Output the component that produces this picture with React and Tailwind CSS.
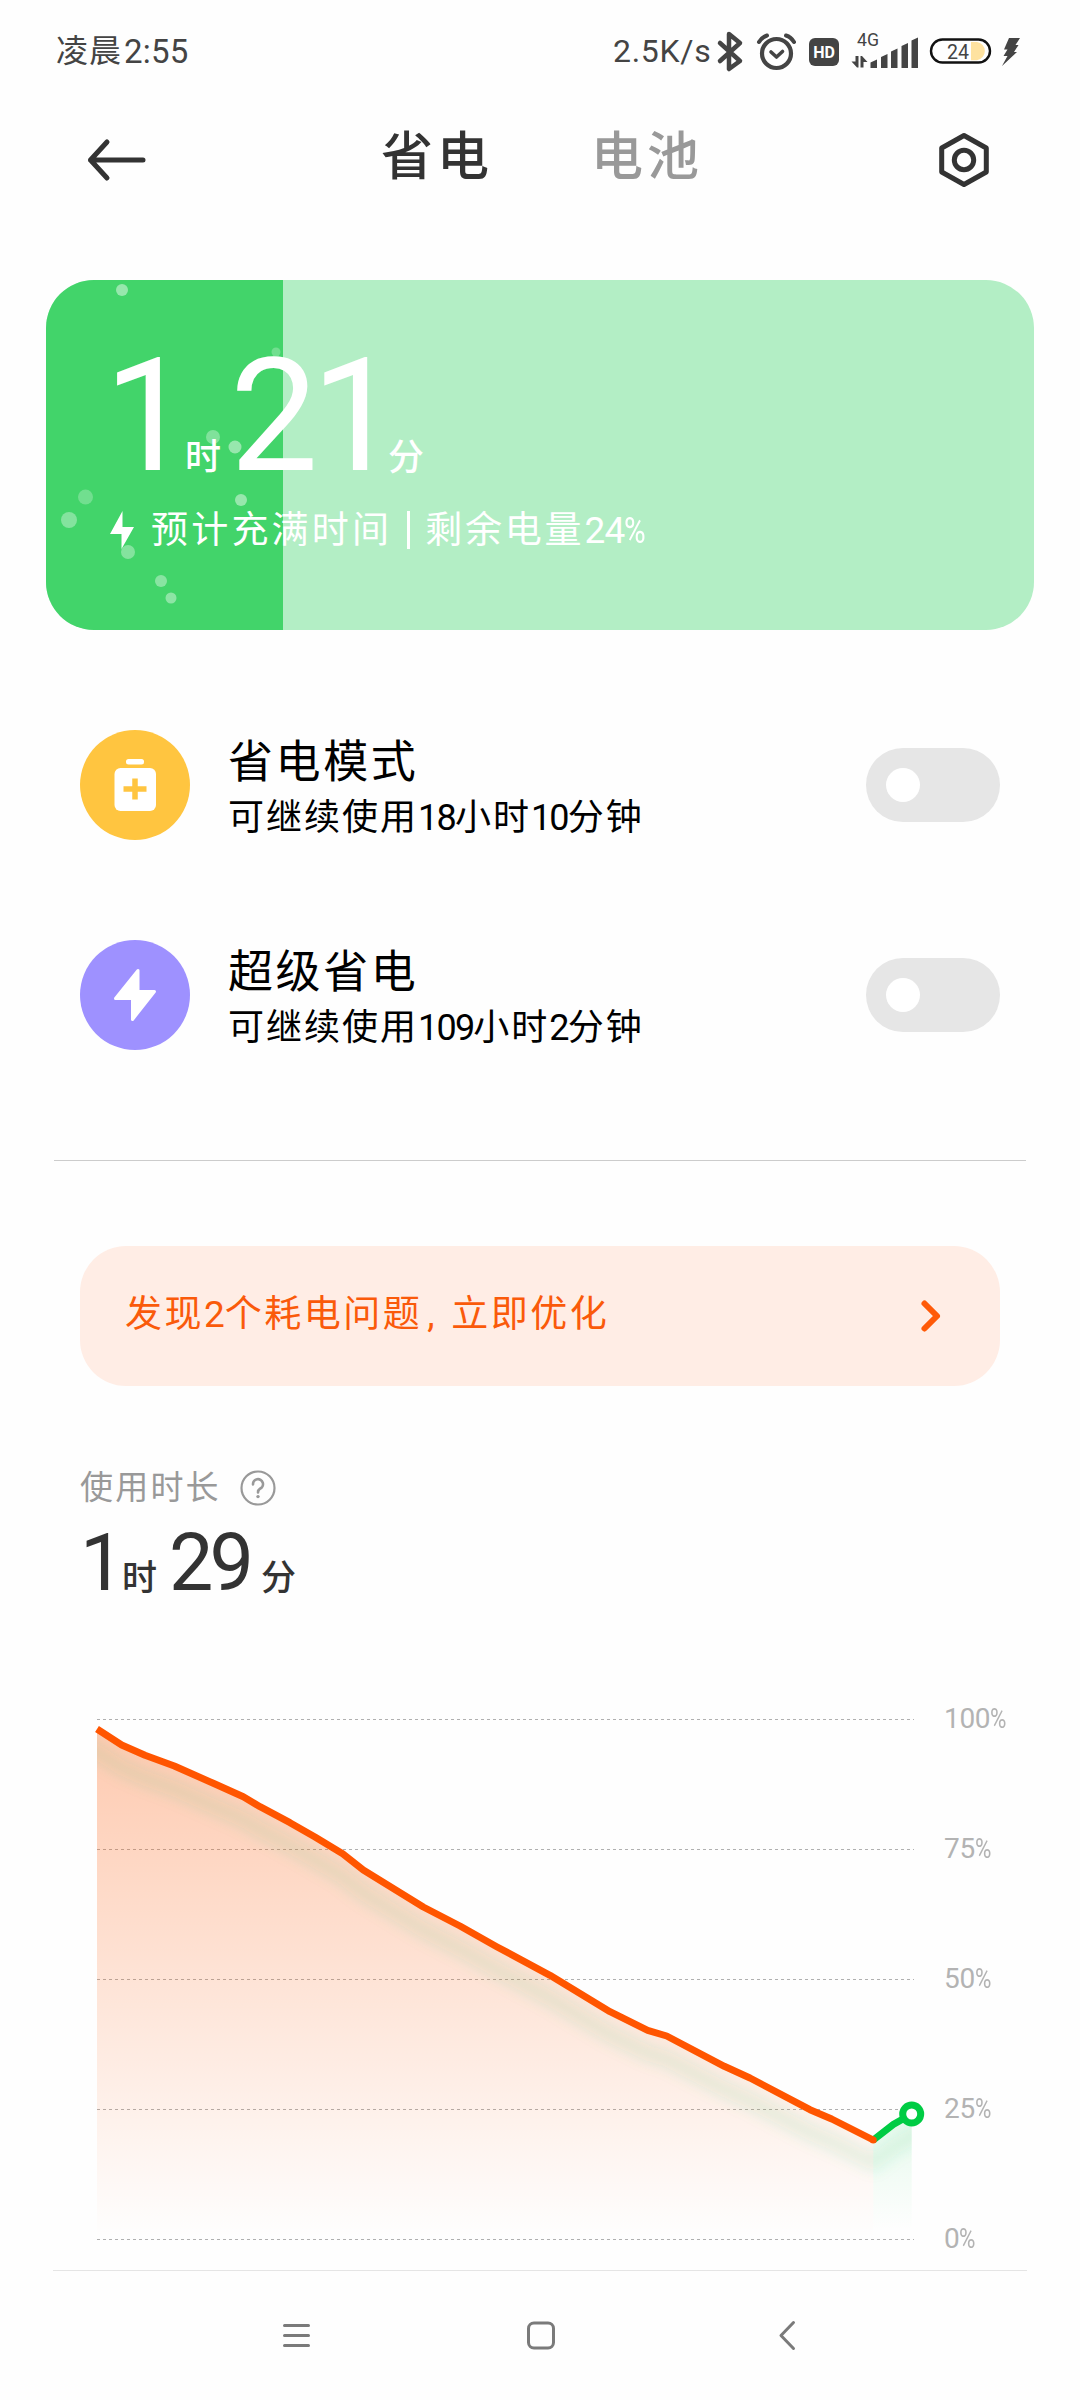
import { useState } from 'react';

const GRID_Y = [1719, 1849, 1979, 2109, 2239];
const LABELS = ['100%', '75%', '50%', '25%', '0%'];

const DRAIN =
    '97,1729 121.7,1745 145,1755.3 174.3,1766 213.3,1783.3 243.3,1796.7 260,1806.7 290,1822.7 315,1837 342.7,1853.7 363.3,1870 423.3,1907 460,1926 496.7,1946.7 550,1975.3 580,1993.6 610,2011.7 647.7,2030.3 666.7,2036 724.3,2066.3 750,2078 810,2109.7 831.7,2119 873.3,2140';
const CHARGE = '873.3,2140 893.3,2124.5 911.7,2114';

// x, y, radius, opacity inside the battery card
const BUBBLES = [
    [76, 10, 6, 0.45],
    [230, 72, 4.5, 0.25],
    [167, 157, 7, 0.33],
    [189, 167, 6.5, 0.45],
    [39.5, 217, 7.5, 0.25],
    [23, 240, 8, 0.35],
    [195, 220, 6, 0.45],
    [82, 272, 7, 0.35],
    [115, 301, 6, 0.38],
    [125, 318, 5.5, 0.4],
];

function StatusBar() {
    return (
        <div className="flex h-[100px] items-start pl-[56px] text-[#444444]">
            <div className="flex h-[102px] w-[557px] items-center text-[32px] leading-none">
                <span className="tracking-[1px]">凌晨</span>
                <span className="ml-[2px] text-[33px] tracking-[0.2px]">2:55</span>
            </div>
            <div className="flex h-[102px] w-[99px] items-center text-[32px] leading-none tracking-[0.7px]">2.5K/s</div>
            <svg className="h-[100px] w-[330px] shrink-0" viewBox="712 0 330 100" fill="none">
                <path d="M720 43 L740 61 L729 69 V34 L740 43 L720 61" stroke="#444444" strokeWidth="4.5" strokeLinejoin="round" strokeLinecap="round" />
                <circle cx="776.5" cy="53.5" r="14.5" stroke="#444444" strokeWidth="4.2" />
                <path d="M771 52 L776.5 57 L782.5 51.5" stroke="#444444" strokeWidth="3.6" strokeLinecap="round" strokeLinejoin="round" />
                <path d="M759 42 Q762 37 767 35.5 M786 35.5 Q791 37 794 42" stroke="#444444" strokeWidth="4" strokeLinecap="round" />
                <rect x="809" y="38" width="30" height="28" rx="6" fill="#444444" />
                <text x="824" y="57.7" textAnchor="middle" fill="#ffffff" className="text-[16px] font-bold">HD</text>
                <text x="857" y="46" fill="#444444" textLength="22" lengthAdjust="spacingAndGlyphs" className="text-[18px]">4G</text>
                <path d="M851.5 61.5 H855.5 V56 H858.5 V67.5 H857 Z M860.5 56 H862 L867.5 62 H863.5 V67.5 H860.5 Z" fill="#444444" />
                <path d="M870.5 62.5 L877 59.5 V68 H870.5 Z M881 57 L887.5 54 V68 H881 Z M891 51.5 L897.5 48.5 V68 H891 Z M901.5 46 L908 43 V68 H901.5 Z M911.5 40.5 L918 37.5 V68 H911.5 Z" fill="#444444" />
                <rect x="931" y="39.5" width="59" height="23" rx="11.5" stroke="#111111" strokeWidth="2.4" />
                <path d="M971 42 H977 A9.2 9.2 0 0 1 977 60.2 H971 Z" fill="#fee2a0" />
                <text x="947" y="58.5" fill="#444444" textLength="22" lengthAdjust="spacingAndGlyphs" className="text-[21px]">24</text>
                <path d="M1009 38 H1020 L1015.5 45 H1018.5 L1014 52 H1017 L1002 66 L1007.5 56 H1003.5 L1007.5 49.5 H1004 Z" fill="#444444" />
            </svg>
        </div>
    );
}

function Header() {
    return (
        <div className="flex h-[120px] items-center pl-[86px] pr-[89px]">
            <svg className="h-[44px] w-[62px]" viewBox="0 0 62 44" fill="none" stroke="#333333" strokeWidth="5" strokeLinecap="round" strokeLinejoin="round">
                <path d="M21 4 L4.5 22 L21 40 M4.5 22 H57" />
            </svg>
            <div className="ml-[233px] flex pb-[5px] text-[52px] font-medium leading-none tracking-[4px]">
                <span className="w-[210px] text-[#333333]">省电</span>
                <span className="text-[#999999]">电池</span>
            </div>
            <svg className="ml-auto h-[58px] w-[54px]" viewBox="0 0 54 58" fill="none" stroke="#333333" strokeWidth="5" strokeLinejoin="round">
                <path d="M27 4.5 L49.3 17 V41 L27 53.5 L4.7 41 V17 Z" />
                <circle cx="27" cy="29" r="9.7" />
            </svg>
        </div>
    );
}

function BatteryCard() {
    return (
        <div className="relative mx-[46px] mt-[60px] h-[350px] overflow-hidden rounded-[48px] bg-[#b3eec5] text-white">
            <div className="absolute inset-y-0 left-0 w-[237px] bg-[#42d46a]">
                <svg className="h-full w-full" viewBox="0 0 237 350">
                    {BUBBLES.map(([x, y, r, o]) => (
                        <circle key={`${x}-${y}`} cx={x} cy={y} r={r} fill="#ffffff" opacity={o} />
                    ))}
                </svg>
            </div>
            <div className="relative flex h-[218px] items-baseline pl-[58px] pt-[58px] leading-none">
                <span className="w-[81px] text-[157px] leading-[157px] tracking-[-8px]">1</span>
                <span className="w-[45px] text-[36px] font-medium">时</span>
                <span className="w-[158px] text-[157px] leading-[157px] tracking-[-7px]">21</span>
                <span className="text-[36px] font-medium">分</span>
            </div>
            <div className="relative flex h-[64px] items-center pl-[64px] text-[37px] leading-none">
                <svg className="h-[38px] w-[24px]" viewBox="0 0 24 38" fill="#ffffff">
                    <path d="M12.5 0 V16 H24 L11.5 38 V23 H0 Z" />
                </svg>
                <span className="ml-[17px] tracking-[3.2px]">预计充满时间</span>
                <span className="ml-[15px] h-[38px] w-[3px] bg-white"></span>
                <span className="ml-[15px] tracking-[2.8px]">剩余电量</span>
                <span className="text-[37px] tracking-[-0.8px]">24</span>
                <span className="inline-block origin-left scale-x-80 text-[37px]">%</span>
            </div>
        </div>
    );
}

function Switch() {
    const [on, setOn] = useState(false);

    return (
        <button
            type="button"
            aria-pressed={on}
            onClick={() => setOn(!on)}
            className={`ml-auto flex h-[74px] w-[134px] items-center rounded-full px-[20px] ${on ? 'justify-end bg-[#42d46a]' : 'bg-[#e6e6e6]'}`}
        >
            <span className="h-[34px] w-[34px] rounded-full bg-white"></span>
        </button>
    );
}

function ModeRow({ icon, color, title, children }) {
    return (
        <div className="flex h-[110px] items-center">
            <div className={`flex h-[110px] w-[110px] items-center justify-center rounded-full ${color}`}>{icon}</div>
            <div className="ml-[38px] pt-[10px] text-black">
                <div className="text-[45px] leading-[54px] tracking-[2.6px]">{title}</div>
                <div className="mt-px text-[36px] leading-[54px] tracking-[2px]">{children}</div>
            </div>
            <Switch />
        </div>
    );
}

function Digits({ children }) {
    return <span className="tracking-[-1.8px]">{children}</span>;
}

function Modes() {
    return (
        <div className="mt-[100px] flex flex-col gap-[100px] px-[80px]">
            <ModeRow
                title="省电模式"
                color="bg-[#ffc540]"
                icon={
                    <svg className="h-[110px] w-[110px]" viewBox="0 0 110 110">
                        <rect x="46" y="29" width="18" height="5.5" rx="2.5" fill="#ffffff" />
                        <rect x="34.5" y="38" width="41.5" height="43" rx="6" fill="#ffffff" />
                        <path d="M43.5 59 H66.5 M55 48.5 V69.5" stroke="#ffc540" strokeWidth="5.5" />
                    </svg>
                }
            >
                可继续使用<Digits>18</Digits>小时<Digits>10</Digits>分钟
            </ModeRow>
            <ModeRow
                title="超级省电"
                color="bg-[#9e91ff]"
                icon={
                    <svg className="h-[110px] w-[110px]" viewBox="0 0 110 110" fill="#ffffff" stroke="#ffffff" strokeWidth="3" strokeLinejoin="round">
                        <path d="M58 30.5 V51.5 H74.5 L52.5 79.5 V58.5 H35.5 Z" />
                    </svg>
                }
            >
                可继续使用<Digits>109</Digits>小时<Digits>2</Digits>分钟
            </ModeRow>
        </div>
    );
}

function Banner() {
    return (
        <div className="mx-[80px] mt-[85px] flex h-[140px] items-center rounded-[46px] bg-[#ffede5] pl-[45px] pr-[58px] text-[37px] leading-none text-[#fa5a0a]">
            <span className="flex pb-[3px] tracking-[2.5px]">
                <span>发现</span>
                <span className="tracking-[0px]">2</span>
                <span>个耗电问题</span>
                <span className="w-[29px] pl-[5px]">,</span>
                <span>立即优化</span>
            </span>
            <svg className="ml-auto h-[34px] w-[22px]" viewBox="0 0 22 34" fill="none" stroke="#ff5a08" strokeWidth="6" strokeLinecap="round" strokeLinejoin="round">
                <path d="M4.5 4.5 L17 17 L4.5 29.5" />
            </svg>
        </div>
    );
}

function Usage() {
    return (
        <div className="mt-[80px] px-[80px]">
            <div className="flex h-[42px] items-center text-[33px] leading-none text-[#999999]">
                <span className="tracking-[2.2px]">使用时长</span>
                <svg className="ml-[19px] mt-[2px] h-[36px] w-[36px]" viewBox="0 0 36 36" fill="none" stroke="#999999">
                    <circle cx="18" cy="18" r="16.5" strokeWidth="2.2" />
                    <path d="M13 14.5 A5 5 0 1 1 20 18.7 Q18 20 18 22.5" strokeWidth="2.6" strokeLinecap="round" />
                    <circle cx="18" cy="26.6" r="1.7" fill="#999999" stroke="none" />
                </svg>
            </div>
            <div className="mt-[9px] flex h-[92px] items-baseline text-[#333333]">
                <span className="w-[42px] text-[79px] leading-[92px] tracking-[-3px]">1</span>
                <span className="w-[47px] text-[35px] font-medium leading-none">时</span>
                <span className="w-[92px] text-[79px] leading-[92px] tracking-[-4px]">29</span>
                <span className="text-[35px] font-medium leading-none">分</span>
            </div>
        </div>
    );
}

function Chart() {
    return (
        <div className="mt-[81px] flex h-[564px]">
            <svg className="h-[564px] w-[944px] shrink-0" viewBox="0 1690 944 564" fill="none">
                <defs>
                    <linearGradient id="drain" gradientUnits="userSpaceOnUse" x1="0" y1="1729" x2="0" y2="2239">
                        <stop offset="0" stopColor="#ff5500" stopOpacity="0.31" />
                        <stop offset="1" stopColor="#ff5500" stopOpacity="0" />
                    </linearGradient>
                    <linearGradient id="charge" gradientUnits="userSpaceOnUse" x1="0" y1="2114" x2="0" y2="2230">
                        <stop offset="0" stopColor="#00cc44" stopOpacity="0.1" />
                        <stop offset="1" stopColor="#00cc44" stopOpacity="0" />
                    </linearGradient>
                    <clipPath id="area">
                        <polygon points={`${DRAIN} ${CHARGE} 911.7,2239 97,2239`} />
                    </clipPath>
                    <filter id="soft" filterUnits="userSpaceOnUse" x="0" y="1690" width="944" height="564">
                        <feGaussianBlur stdDeviation="7" />
                    </filter>
                </defs>
                {GRID_Y.map((y) => (
                    <path key={y} d={`M97 ${y + 0.5} H914`} stroke="#b0b0b0" strokeDasharray="3 3" />
                ))}
                <polygon points={`${DRAIN} 873.3,2239 97,2239`} fill="url(#drain)" />
                <polygon points={`${CHARGE} 911.7,2239 873.3,2239`} fill="url(#charge)" />
                <g clipPath="url(#area)">
                    <polyline points={`80,1718 ${DRAIN} ${CHARGE} 930,2104`} transform="translate(0 23)" stroke="#33bb66" strokeOpacity="0.12" strokeWidth="15" filter="url(#soft)" />
                </g>
                <polyline points={CHARGE} stroke="#00cc44" strokeWidth="7" />
                <polyline points={DRAIN} stroke="#ff5500" strokeWidth="7" strokeLinejoin="round" />
                <circle cx="873.3" cy="2140" r="3.5" fill="#ff5500" />
                <circle cx="911.7" cy="2114" r="9" fill="#ffffff" stroke="#00cc44" strokeWidth="7" />
            </svg>
            <div className="flex h-[563px] flex-col justify-between pt-[15px] text-[28px] leading-[28px] tracking-[-0.3px] text-[#b3b3b3]">
                {LABELS.map((label) => (
                    <div key={label} className="flex">
                        <span>{label.replace('%', '')}</span>
                        <span className="origin-left scale-x-80">%</span>
                    </div>
                ))}
            </div>
        </div>
    );
}

function NavBar() {
    return (
        <div className="mx-[53px] mt-[16px] flex h-[130px] items-center border-t border-[#e5e5e5] pl-[228px] pr-[230px]">
            <svg className="h-[32px] w-[32px]" viewBox="0 0 32 32" fill="none" stroke="#7a7a7a" strokeWidth="3" strokeLinecap="round">
                <path d="M3.5 5.5 H27.5 M3.5 15.5 H27.5 M3.5 25.5 H27.5" />
            </svg>
            <svg className="ml-[212px] h-[32px] w-[32px]" viewBox="0 0 32 32" fill="none" stroke="#7a7a7a" strokeWidth="3">
                <rect x="3.5" y="3" width="25" height="25" rx="5.5" />
            </svg>
            <svg className="ml-auto h-[32px] w-[20px]" viewBox="0 0 20 32" fill="none" stroke="#7a7a7a" strokeWidth="3" strokeLinecap="round" strokeLinejoin="round">
                <path d="M16.5 2.5 L4 15.5 L16.5 28.5" />
            </svg>
        </div>
    );
}

export default function App() {
    return (
        <div className="h-[2400px] w-[1080px] overflow-hidden bg-[#fefefe] font-['Roboto','Noto_Sans_CJK_SC',sans-serif]">
            <StatusBar />
            <Header />
            <BatteryCard />
            <Modes />
            <div className="mx-[54px] mt-[110px] h-px bg-[#cccccc]"></div>
            <Banner />
            <Usage />
            <Chart />
            <NavBar />
        </div>
    );
}
